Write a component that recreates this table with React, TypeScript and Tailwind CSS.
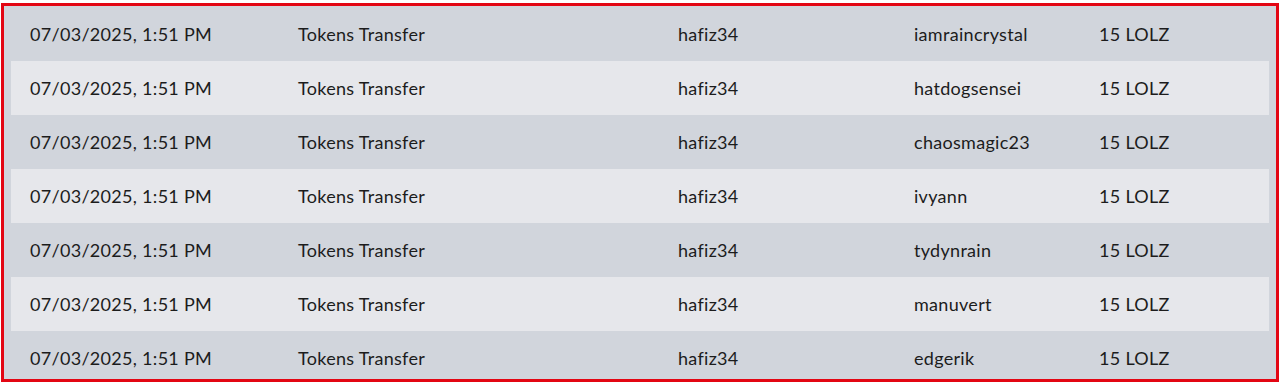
const rows = [
  "iamraincrystal",
  "hatdogsensei",
  "chaosmagic23",
  "ivyann",
  "tydynrain",
  "manuvert",
  "edgerik",
];

export default function App() {
  return (
    <div className="bg-white w-[1280px] h-[386px] pt-[3px] px-px font-['Lato',sans-serif] text-[#1c1c1c]">
      <div className="h-[379px] border-[3px] border-[#e30613] bg-[#d1d5dc] overflow-hidden px-[7px] pt-px">
        {rows.map((to, i) => (
          <div
            key={to}
            className={
              "h-[54px] grid grid-cols-[268px_380px_236px_185px_1fr] items-center pl-[19px] text-[18px] tracking-[0.3px] " +
              (i % 2 === 1 ? "bg-[#e6e7eb]" : "bg-[#d1d5dc]")
            }
          >
            <div>07/03/2025, 1:51 PM</div>
            <div>Tokens Transfer</div>
            <div>hafiz34</div>
            <div>{to}</div>
            <div>15 LOLZ</div>
          </div>
        ))}
      </div>
    </div>
  );
}
